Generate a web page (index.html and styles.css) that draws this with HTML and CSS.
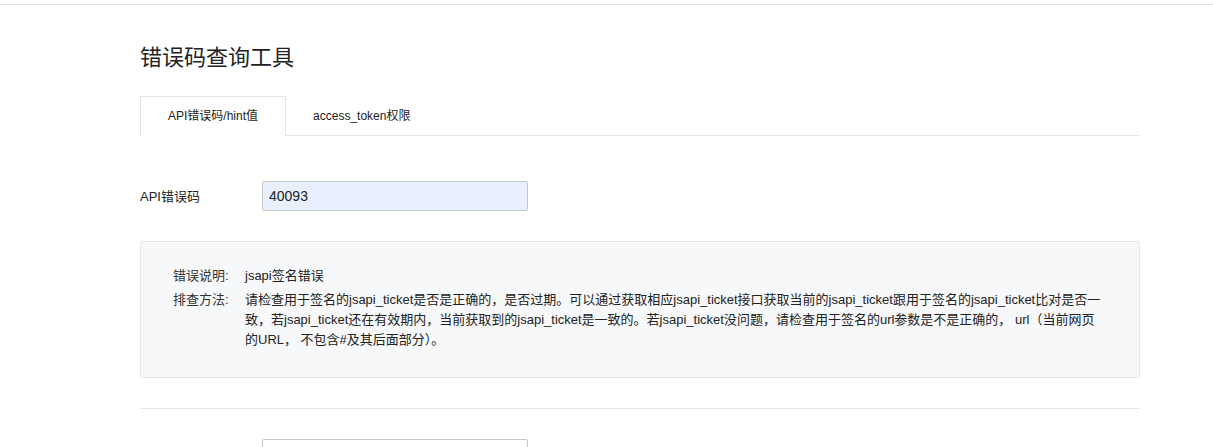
FILE: index.html
```html
<!DOCTYPE html>
<html lang="zh-CN">
<head>
    <meta charset="UTF-8">
    <meta name="viewport" content="width=device-width, initial-scale=1.0">
    <title>错误码查询工具</title>
    <link rel="stylesheet" href="styles.css">
</head>
<body>
    <div class="topbar"></div>
    <div class="main">
        <h2 class="title">错误码查询工具</h2>
        <div class="tabs">
            <div class="tab active">API错误码/hint值</div>
            <div class="tab">access_token权限</div>
        </div>
        <div class="form-row">
            <label class="form-label" for="code">API错误码</label>
            <input class="form-input filled" id="code" type="text" value="40093">
        </div>
        <div class="result">
            <div class="result-row">
                <div class="result-label">错误说明:</div>
                <div class="result-text">jsapi签名错误</div>
            </div>
            <div class="result-row">
                <div class="result-label">排查方法:</div>
                <div class="result-text">请检查用于签名的jsapi_ticket是否是正确的，是否过期。可以通过获取相应jsapi_ticket接口获取当前的jsapi_ticket跟用于签名的jsapi_ticket比对是否一致，若jsapi_ticket还在有效期内，当前获取到的jsapi_ticket是一致的。若jsapi_ticket没问题，请检查用于签名的url参数是不是正确的， url（当前网页的URL， 不包含#及其后面部分）。</div>
            </div>
        </div>
        <div class="divider"></div>
        <div class="form-row">
            <label class="form-label" for="hint"></label>
            <input class="form-input" id="hint" type="text">
        </div>
    </div>
</body>
</html>
```

FILE: styles.css
```css
body {
    margin: 0;
    font-family: "Liberation Sans", "Noto Sans CJK SC", sans-serif;
    color: #222;
    background-color: #fff;
}
.topbar {
    height: 4px;
    border-bottom: 1px solid #e2e2e2;
}
.main {
    width: 1000px;
    margin-left: 140px;
    padding-top: 38px;
}
.title {
    margin: 0;
    font-size: 22px;
    font-weight: normal;
    line-height: 30px;
    color: #222;
}
.tabs {
    display: flex;
    margin-top: 23px;
    border-bottom: 1px solid #e5e5e5;
}
.tab {
    height: 39px;
    line-height: 39px;
    padding: 0 26px;
    font-size: 12px;
    border: 1px solid transparent;
    border-bottom: none;
    margin-bottom: -1px;
    cursor: pointer;
}
.tab.active {
    padding: 0 27px;
    border-color: #e5e5e5;
    background-color: #fff;
}
.form-row {
    display: flex;
    align-items: center;
    margin-top: 45px;
}
.form-label {
    width: 122px;
    font-size: 13px;
    margin-top: -2px;
}
.form-input {
    box-sizing: border-box;
    width: 266px;
    height: 30px;
    padding: 0 6px;
    border: 1px solid #c8c8c8;
    border-radius: 2px;
    font-family: inherit;
    font-size: 14px;
    color: #222;
    background-color: #fff;
}
.form-input.filled {
    background-color: #e8f0fe;
}
.result {
    margin-top: 30px;
    padding: 24px 32px 27px 32px;
    background-color: #f7f8fa;
    border: 1px solid #e6e6e6;
    border-radius: 3px;
    font-size: 13px;
    line-height: 20px;
}
.result-row {
    display: flex;
    margin-bottom: 4px;
}
.result-row:last-child {
    margin-bottom: 0;
}
.result-label {
    width: 72px;
    flex-shrink: 0;
    color: #333;
}
.result-text {
    flex: 1;
}
.divider {
    margin-top: 30px;
    border-top: 1px solid #e5e5e5;
}
.divider + .form-row {
    margin-top: 30px;
}
```
